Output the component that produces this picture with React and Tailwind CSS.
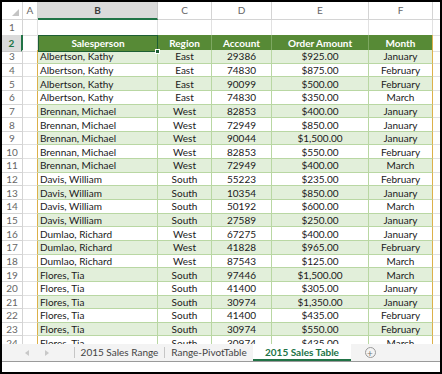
import React from "react";

const ROWS = [
  ["Albertson, Kathy", "East", "29386", "$925.00", "January"],
  ["Albertson, Kathy", "East", "74830", "$875.00", "February"],
  ["Albertson, Kathy", "East", "90099", "$500.00", "February"],
  ["Albertson, Kathy", "East", "74830", "$350.00", "March"],
  ["Brennan, Michael", "West", "82853", "$400.00", "January"],
  ["Brennan, Michael", "West", "72949", "$850.00", "January"],
  ["Brennan, Michael", "West", "90044", "$1,500.00", "January"],
  ["Brennan, Michael", "West", "82853", "$550.00", "February"],
  ["Brennan, Michael", "West", "72949", "$400.00", "March"],
  ["Davis, William", "South", "55223", "$235.00", "February"],
  ["Davis, William", "South", "10354", "$850.00", "January"],
  ["Davis, William", "South", "50192", "$600.00", "March"],
  ["Davis, William", "South", "27589", "$250.00", "January"],
  ["Dumlao, Richard", "West", "67275", "$400.00", "January"],
  ["Dumlao, Richard", "West", "41828", "$965.00", "February"],
  ["Dumlao, Richard", "West", "87543", "$125.00", "March"],
  ["Flores, Tia", "South", "97446", "$1,500.00", "March"],
  ["Flores, Tia", "South", "41400", "$305.00", "January"],
  ["Flores, Tia", "South", "30974", "$1,350.00", "January"],
  ["Flores, Tia", "South", "41400", "$435.00", "February"],
  ["Flores, Tia", "South", "30974", "$550.00", "February"],
  ["Flores, Tia", "South", "30974", "$435.00", "March"],
];

const COLS = "grid grid-cols-[21px_15px_120px_54px_60px_97px_64px_1fr]";

const ColumnHeader = () => (
  <div className={`${COLS} h-[18px] shrink-0 text-[10px] text-[#666]`}>
    <div className="relative border-r border-b border-[#d4d4d4] bg-white">
      <svg className="absolute right-[3px] bottom-[3px]" width="7" height="7" viewBox="0 0 7 7">
        <polygon points="7,0 7,7 0,7" fill="#c4c4c4" />
      </svg>
    </div>
    <div className="flex items-center justify-center border-r border-b border-[#d4d4d4]">A</div>
    <div className="flex items-center justify-center border-r border-[#c8c8c8] border-b-2 border-b-[#217346] bg-[#dadada] font-bold text-[#3b3b3b]">
      B
    </div>
    {["C", "D", "E", "F"].map((c) => (
      <div key={c} className="flex items-center justify-center border-r border-b border-[#d4d4d4]">
        {c}
      </div>
    ))}
    <div className="border-b border-[#d4d4d4]" />
  </div>
);

const RowNum = ({ n, active }) =>
  active ? (
    <div className="flex items-center justify-center border-r-2 border-r-[#217346] border-b border-b-[#c8c8c8] bg-[#dadada] text-[10px] font-bold text-[#217346]">
      {n}
    </div>
  ) : (
    <div className="flex items-center justify-center border-r border-b border-[#d4d4d4] text-[10px] text-[#666]">
      {n}
    </div>
  );

const Sheet = () => (
  <div className="flex h-[342px] flex-col overflow-hidden bg-white">
    <ColumnHeader />

    {/* row 1 */}
    <div className={`${COLS} h-[15px] shrink-0`}>
      <RowNum n={1} />
      {[0, 1, 2, 3, 4, 5].map((i) => (
        <div key={i} className="border-r border-b border-[#e1e1e1]" />
      ))}
      <div className="border-b border-[#e1e1e1]" />
    </div>

    {/* row 2 - table header */}
    <div className={`${COLS} h-[15px] shrink-0 text-[10px] font-bold text-white`}>
      <RowNum n={2} active />
      <div className="border-r border-b border-[#e1e1e1]" />
      <div className="relative flex items-center justify-center border-[1.5px] border-[#1d5e33] bg-[#578a36]">
        Salesperson
        <div className="absolute -right-[3px] -bottom-[3px] h-[5px] w-[5px] border border-white bg-[#1d5e33]" />
      </div>
      <div className="flex items-center justify-center border-r border-[#7ea862] bg-[#578a36]">Region</div>
      <div className="flex items-center justify-center border-r border-[#7ea862] bg-[#578a36]">Account</div>
      <div className="flex items-center justify-center border-r border-[#7ea862] bg-[#578a36]">Order Amount</div>
      <div className="flex items-center justify-center border-r-[1.5px] border-[#dcb14a] bg-[#578a36]">Month</div>
      <div className="border-b border-[#e1e1e1]" />
    </div>

    {ROWS.map((r, i) => {
      const band = i % 2 === 0 ? "bg-[#e2efda]" : "bg-white";
      return (
        <div key={i} className={`${COLS} h-[13.65px] shrink-0 text-[10px] leading-none text-[#1a1a1a]`}>
          <RowNum n={i + 3} />
          <div className="border-r-[1.5px] border-r-[#dcb14a] border-b border-b-[#e1e1e1]" />
          <div className={`flex items-center border-r border-b border-[#b9d7a3] pl-[2px] ${band}`}>{r[0]}</div>
          <div className={`flex items-center justify-center border-r border-b border-[#b9d7a3] ${band}`}>{r[1]}</div>
          <div className={`flex items-center justify-center border-r border-b border-[#b9d7a3] ${band}`}>{r[2]}</div>
          <div className={`flex items-center justify-center border-r border-b border-[#b9d7a3] ${band}`}>{r[3]}</div>
          <div className={`flex items-center justify-center border-r-[1.5px] border-r-[#dcb14a] border-b border-b-[#b9d7a3] ${band}`}>
            {r[4]}
          </div>
          <div className="border-b border-[#e1e1e1]" />
        </div>
      );
    })}
  </div>
);

const TabBar = () => (
  <div className="flex h-[18px] shrink-0 items-stretch border-b border-[#9a9a9a] bg-[#f3f3f3] text-[10px] text-[#444]">
    <div className="flex w-[72px] items-center gap-[16px] pl-[23px]">
      <svg width="4" height="6" viewBox="0 0 4 6">
        <polygon points="4,0 4,6 0,3" fill="#c8c8c8" />
      </svg>
      <svg width="4" height="6" viewBox="0 0 4 6">
        <polygon points="0,0 0,6 4,3" fill="#c8c8c8" />
      </svg>
    </div>
    <div className="my-[3px] w-px bg-[#c6c6c6]" />
    <div className="flex w-[89px] items-center justify-center">2015 Sales Range</div>
    <div className="my-[3px] w-px bg-[#c6c6c6]" />
    <div className="flex w-[88px] items-center justify-center">Range-PivotTable</div>
    <div className="flex w-[98px] items-center justify-center border-b-2 border-[#217346] bg-white pt-[2px] font-bold text-[#217346]">
      2015 Sales Table
    </div>
    <div className="flex w-[38px] items-center justify-center">
      <div className="flex h-[11px] w-[11px] items-center justify-center rounded-full border border-[#9a9a9a] text-[10px] leading-none text-[#777]">
        +
      </div>
    </div>
  </div>
);

export default function App() {
  return (
    <div
      className="flex h-[374px] w-[442px] flex-col border-2 border-black bg-white"
      style={{ fontFamily: "Lato, 'Liberation Sans', sans-serif" }}
    >
      <Sheet />
      <TabBar />
      <div className="flex-1 bg-white" />
    </div>
  );
}
